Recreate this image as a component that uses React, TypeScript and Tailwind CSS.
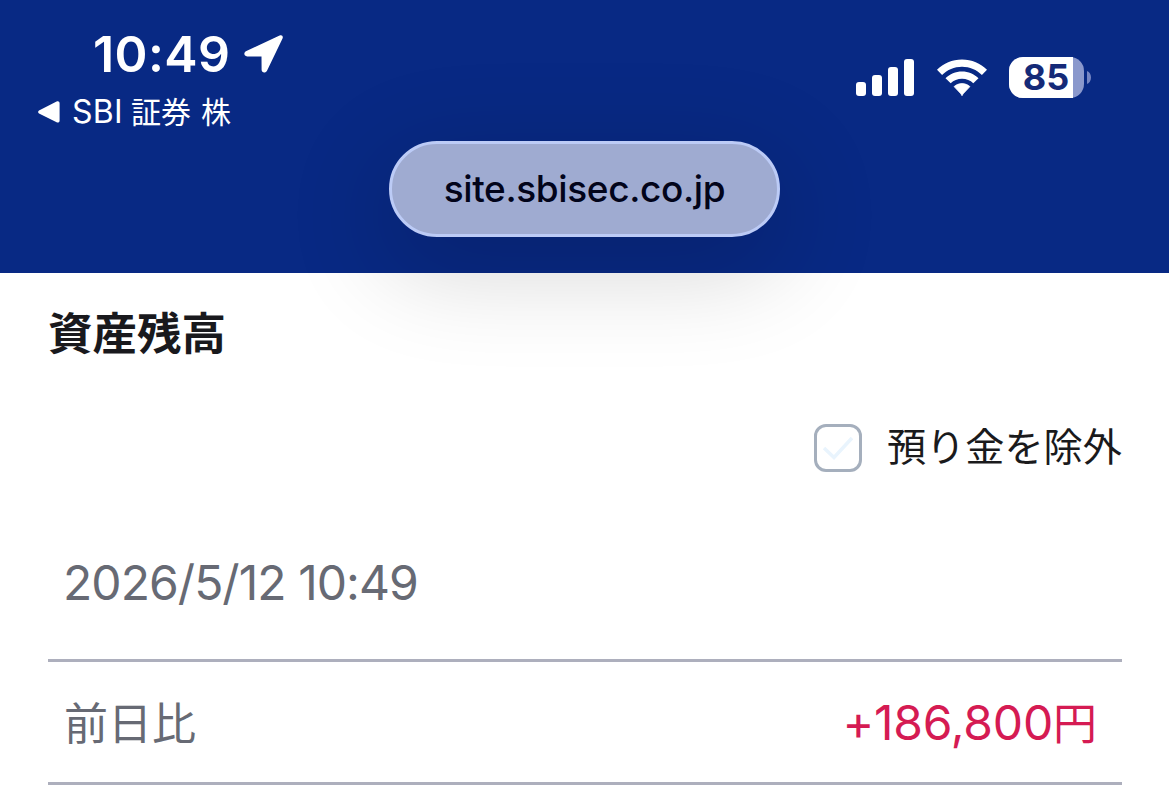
const signalBars = ["h-[14px]", "h-[21px]", "h-[29px]", "h-[37px]"];

const LocationIcon = () => (
  <svg width="42" height="42" viewBox="0 0 42 42" fill="#fff">
    <path d="M37.6 2.6 C40 1.6 41.6 3.4 40.4 5.8 L25 37.8 C23.6 40.6 19.6 40 19.6 36.8 L19.5 23.6 L5.2 23.4 C1.8 23.3 1.3 19.4 4.4 18 Z" />
  </svg>
);

const WifiIcon = () => (
  <svg width="52" height="38" viewBox="0 0 52 38" fill="#fff">
    <path d="M26 0.5 C35.8 0.5 44.6 4.4 51 10.8 L45.9 16 C40.7 10.9 33.7 7.8 26 7.8 C18.3 7.8 11.3 10.9 6.1 16 L1 10.8 C7.4 4.4 16.2 0.5 26 0.5 Z" />
    <path d="M26 12.4 C32.4 12.4 38.2 15 42.5 19.2 L37.3 24.3 C34.4 21.5 30.4 19.8 26 19.8 C21.6 19.8 17.6 21.5 14.7 24.3 L9.5 19.2 C13.8 15 19.6 12.4 26 12.4 Z" />
    <path d="M26 24.6 C29 24.6 31.8 25.7 33.9 27.6 L27 34.9 L26 36.7 L25 34.9 L18.1 27.6 C20.2 25.7 23 24.6 26 24.6 Z" stroke="#fff" strokeWidth="0.8" strokeLinejoin="round" />
  </svg>
);

const Battery = () => (
  <div className="flex items-center gap-[3px]">
    <div className="flex h-[41px] w-[75px] rounded-[14px] bg-[#8a98cc]">
      <div className="flex w-[64px] items-center justify-center rounded-l-[14px] bg-white pl-[10px] text-[36px] font-bold leading-[45px] text-[#152a78]">
        85
      </div>
    </div>
    <svg width="4" height="13" viewBox="0 0 4 13" fill="#7585c2">
      <path d="M0 0 C2.6 1.2 4 3.6 4 6.5 C4 9.4 2.6 11.8 0 13 Z" />
    </svg>
  </div>
);

const StatusBar = () => (
  <div className="flex h-[141px] justify-between pt-6 pl-[37px] pr-[78px] text-white">
    <div>
      <div className="flex h-[60px] items-center gap-[12px] pl-[56px]">
        <span className="text-[50px] font-semibold leading-[60px] tracking-[0.4px]">
          10:49
        </span>
        <LocationIcon />
      </div>
      <div className="mt-2 flex h-10 items-center gap-[12px]">
        <svg width="23" height="22" viewBox="0 0 23 22" fill="#fff">
          <path d="M19.6 0.6 C21.3 -0.2 22.6 0.8 22.6 2.4 L22.6 19.4 C22.6 21.2 21.2 22 19.6 21.2 L2 12.4 C0.8 11.6 0.8 10.2 2 9.5 Z" />
        </svg>
        <div className="flex items-baseline gap-[8px] text-[30px] leading-10">
          <span className="text-[32px] tracking-[0.3px]">SBI</span>
          <span className="whitespace-pre [word-spacing:1.5px]">証券 株</span>
        </div>
      </div>
    </div>
    <div className="mt-[33px] flex h-[41px] items-center">
      <div className="flex h-[37px] items-end gap-[6px]">
        {signalBars.map((height) => (
          <div key={height} className={`w-[10px] rounded-[3px] bg-white ${height}`} />
        ))}
      </div>
      <div className="ml-[22px] mr-[21px]">
        <WifiIcon />
      </div>
      <Battery />
    </div>
  </div>
);

const AddressPill = () => (
  <div className="relative mx-auto flex h-24 w-[391px] items-center justify-center rounded-full border-[3px] border-[#bccbf6] bg-[#9fabd1] shadow-[0_26px_100px_10px_rgba(0,0,0,0.16)]">
    <span className="text-[37px] font-medium leading-[44px] tracking-[-0.37px] text-[#02041a]">
      site.sbisec.co.jp
    </span>
  </div>
);

const ExcludeDeposit = () => (
  <div className="flex items-center justify-end gap-[25px]">
    <div className="flex h-12 w-12 items-center justify-center rounded-[12px] border-[3px] border-[#a5afbd]">
      <svg width="32" height="26" viewBox="0 0 32 26" fill="none" stroke="#e9f4fd" strokeWidth="3.5">
        <path d="M2 13 L12 22.5 L30 3" />
      </svg>
    </div>
    <span className="-mt-0.5 text-[39.2px] leading-[48px] text-[#1a1a1c]">
      預り金を除外
    </span>
  </div>
);

const App = () => {
  return (
    <div className="h-[803px] w-[1169px] overflow-hidden bg-white font-['Inter','Noto_Sans_CJK_JP',sans-serif]">
      <header className="h-[273px] bg-[#082984]">
        <StatusBar />
        <AddressPill />
      </header>
      <main className="relative pl-12 pr-[47px] pt-[31px]">
        <h1 className="text-[44.5px] font-bold leading-[60px] text-[#19191d]">
          資産残高
        </h1>
        <div className="mt-[60px]">
          <ExcludeDeposit />
        </div>
        <div className="mt-[81px] border-b-[3px] border-[#adafbd] pl-[15px] pb-[46px] text-[48px] leading-[60px] tracking-[-0.95px] text-[#676a74]">
          2026/5/12 10:49
        </div>
        <div className="flex h-[123px] items-center justify-between border-b-[3px] border-[#adafbd] pt-[3px] pl-4 pr-[25px]">
          <span className="text-[44px] leading-[60px] text-[#676a74]">
            前日比
          </span>
          <span className="text-[48px] leading-[60px] tracking-[-0.2px] text-[#d51b53]">
            +186,800<span className="text-[44px] tracking-normal">円</span>
          </span>
        </div>
      </main>
    </div>
  );
};

export default App;
